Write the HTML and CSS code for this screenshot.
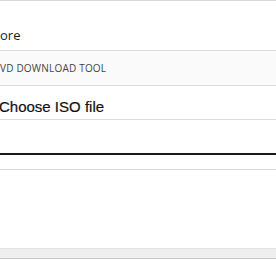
FILE: index.html
```html
<!DOCTYPE html>
<html lang="en">
<head>
    <meta charset="UTF-8">
    <meta name="viewport" content="width=device-width, initial-scale=1.0">
    <title>Download tool</title>
    <link rel="stylesheet" href="styles.css">
</head>
<body>
    <div class="panel">
        <div class="row store-row">
            <span class="store-label">ore</span>
        </div>
        <div class="row tool-row">
            <span class="tool-label">VD DOWNLOAD TOOL</span>
        </div>
        <div class="row choose-row">
            <span class="choose-label">Choose ISO file</span>
        </div>
        <div class="path-input"></div>
        <div class="spacer-row"></div>
        <div class="blank-area"></div>
        <div class="status-bar"></div>
    </div>
</body>
</html>
```

FILE: styles.css
```css
body {
    margin: 0;
    background-color: #fff;
    font-family: "Open Sans", Arial, sans-serif;
    overflow: hidden;
}
.panel {
    display: flex;
    flex-direction: column;
    border-top: 1px solid #d8d8d8;
}
.row {
    display: flex;
    align-items: center;
    box-sizing: border-box;
    border-bottom: 1px solid #dcdcdc;
    white-space: nowrap;
}
.store-row {
    height: 50px;
    align-items: flex-start;
}
.store-label {
    font-size: 13px;
    color: #222;
    margin-top: 25px;
}
.tool-row {
    height: 35px;
    background-color: #fafafa;
}
.tool-label {
    font-size: 10px;
    letter-spacing: 0.2px;
    color: #444;
}
.choose-row {
    height: 34px;
    padding-top: 8px;
}
.choose-label {
    font-family: "Liberation Sans", Arial, sans-serif;
    font-size: 15px;
    color: #111;
    margin-left: -1px;
    -webkit-text-stroke: 0.2px #111;
}
.path-input {
    box-sizing: border-box;
    height: 35px;
    border-bottom: 2px solid #1a1a1a;
}
.spacer-row {
    box-sizing: border-box;
    height: 15px;
    border-bottom: 1px solid #d8d8d8;
}
.blank-area {
    height: 78px;
}
.status-bar {
    height: 9px;
    background-color: #efefef;
    border-top: 1px solid #e4e4e4;
    border-bottom: 1px solid #c8c8c8;
}
```
